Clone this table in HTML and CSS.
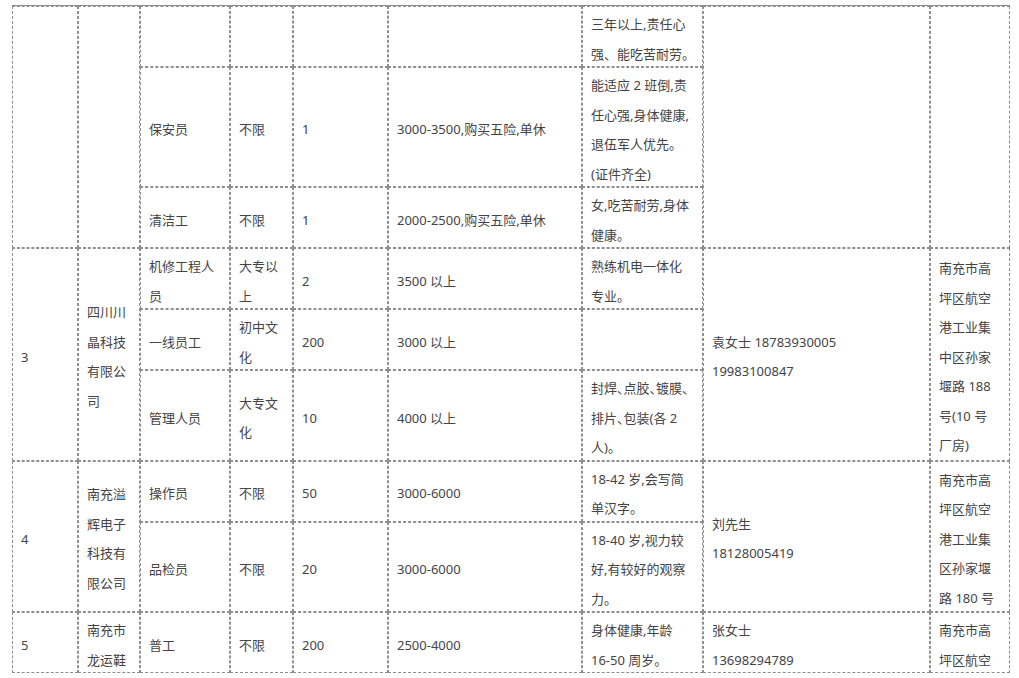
FILE: index.html
```html
<!DOCTYPE html>
<html lang="zh-CN">
<head>
<meta charset="utf-8">
<title>招聘信息</title>
<link rel="stylesheet" href="styles.css">
</head>
<body>
<div class="page">
<table class="jobs">
<colgroup>
<col class="c1"><col class="c2"><col class="c3"><col class="c4"><col class="c5"><col class="c6"><col class="c7"><col class="c8"><col class="c9">
</colgroup>
<tbody>
<tr>
<td rowspan="3"></td>
<td rowspan="3"></td>
<td></td><td></td><td></td><td></td>
<td><span class="t">三年以上,责任心<br>强、能吃苦耐劳。</span></td>
<td rowspan="3"></td>
<td rowspan="3"></td>
</tr>
<tr>
<td><span class="t">保安员</span></td>
<td><span class="t">不限</span></td>
<td><span class="t">1</span></td>
<td><span class="t">3000-3500,购买五险,单休</span></td>
<td><span class="t">能适应 2 班倒,责<br>任心强,身体健康,<br>退伍军人优先。<br>(证件齐全)</span></td>
</tr>
<tr>
<td><span class="t">清洁工</span></td>
<td><span class="t">不限</span></td>
<td><span class="t">1</span></td>
<td><span class="t">2000-2500,购买五险,单休</span></td>
<td><span class="t">女,吃苦耐劳,身体<br>健康。</span></td>
</tr>
<tr>
<td rowspan="3"><span class="t">3</span></td>
<td rowspan="3"><span class="t">四川川<br>晶科技<br>有限公<br>司</span></td>
<td><span class="t">机修工程人<br>员</span></td>
<td><span class="t">大专以<br>上</span></td>
<td><span class="t">2</span></td>
<td><span class="t">3500 以上</span></td>
<td><span class="t">熟练机电一体化<br>专业。</span></td>
<td rowspan="3"><span class="t">袁女士 18783930005<br>19983100847</span></td>
<td rowspan="3"><span class="t">南充市高<br>坪区航空<br>港工业集<br>中区孙家<br>堰路 188<br>号(10 号<br>厂房)</span></td>
</tr>
<tr>
<td><span class="t">一线员工</span></td>
<td><span class="t">初中文<br>化</span></td>
<td><span class="t">200</span></td>
<td><span class="t">3000 以上</span></td>
<td></td>
</tr>
<tr>
<td><span class="t">管理人员</span></td>
<td><span class="t">大专文<br>化</span></td>
<td><span class="t">10</span></td>
<td><span class="t">4000 以上</span></td>
<td><span class="t halt">封焊、点胶、镀膜、<br>排片、包装(各 2<br>人)。</span></td>
</tr>
<tr>
<td rowspan="2"><span class="t">4</span></td>
<td rowspan="2"><span class="t">南充溢<br>辉电子<br>科技有<br>限公司</span></td>
<td><span class="t">操作员</span></td>
<td><span class="t">不限</span></td>
<td><span class="t">50</span></td>
<td><span class="t">3000-6000</span></td>
<td><span class="t">18-42 岁,会写简<br>单汉字。</span></td>
<td rowspan="2"><span class="t">刘先生<br>18128005419</span></td>
<td rowspan="2"><span class="t">南充市高<br>坪区航空<br>港工业集<br>区孙家堰<br>路 180 号</span></td>
</tr>
<tr>
<td><span class="t">品检员</span></td>
<td><span class="t">不限</span></td>
<td><span class="t">20</span></td>
<td><span class="t">3000-6000</span></td>
<td><span class="t">18-40 岁,视力较<br>好,有较好的观察<br>力。</span></td>
</tr>
<tr>
<td><span class="t">5</span></td>
<td><span class="t">南充市<br>龙运鞋</span></td>
<td><span class="t">普工</span></td>
<td><span class="t">不限</span></td>
<td><span class="t">200</span></td>
<td><span class="t">2500-4000</span></td>
<td><span class="t">身体健康,年龄<br>16-50 周岁。</span></td>
<td><span class="t">张女士<br>13698294789</span></td>
<td><span class="t">南充市高<br>坪区航空</span></td>
</tr>
</tbody>
</table>
</div>
</body>
</html>
```
FILE: styles.css
```css
html, body {
  margin: 0;
  padding: 0;
  background: #fff;
}

.page {
  padding: 5px 0 0 12px;
}

.jobs {
  table-layout: fixed;
  width: 998px;
  border-collapse: separate;
  border-spacing: 0;
  border-top: 1px solid #8c8c8c;
  font-family: "Noto Sans", "Noto Sans CJK SC", sans-serif;
  font-size: 13px;
  color: #444;
}

.c1 { width: 66px; }
.c2 { width: 62px; }
.c3 { width: 90px; }
.c4 { width: 63px; }
.c5 { width: 95px; }
.c6 { width: 194px; }
.c7 { width: 121px; }
.c8 { width: 227px; }
.c9 { width: 80px; }

.jobs td {
  border: 1px dashed #8f8f8f;
  padding: 0 6px 0 8px;
  line-height: 29.5px;
  vertical-align: middle;
  white-space: nowrap;
  overflow: hidden;
}

.t {
  line-height: 18px;
  vertical-align: -3px;
}

.halt {
  font-feature-settings: "halt";
}
```
